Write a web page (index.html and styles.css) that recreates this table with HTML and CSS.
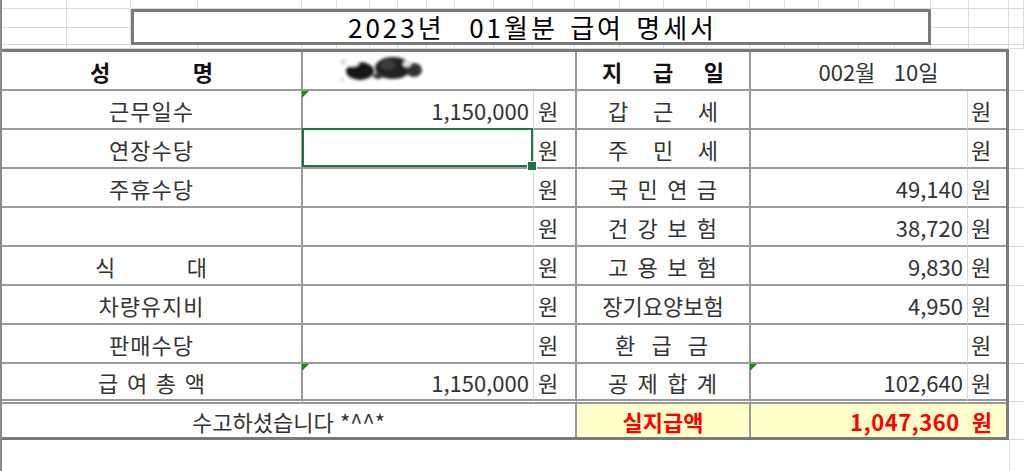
FILE: index.html
```html
<!DOCTYPE html>
<html lang="ko">
<head>
<meta charset="utf-8">
<title>급여 명세서</title>
<link rel="stylesheet" href="styles.css">
</head>
<body>
<div class="sheet">
  <div class="top">
    <div class="title">2023년  01월분 급여 명세서</div>
    <div class="gc"></div><div class="gc"></div><div class="gc"></div><div class="gc"></div><div class="gc"></div><div class="gc"></div><div class="gc"></div><div class="gc"></div><div class="gc"></div><div class="gc"></div><div class="gc"></div><div class="gc"></div>
    <div class="gc"></div><div class="gc"></div><div class="gc"></div><div class="gc"></div><div class="gc"></div><div class="gc"></div><div class="gc"></div><div class="gc"></div><div class="gc"></div><div class="gc"></div><div class="gc"></div><div class="gc"></div>
    <div class="gc"></div><div class="gc"></div><div class="gc"></div><div class="gc"></div><div class="gc"></div>
    <div class="gc"></div><div class="gc"></div><div class="gc"></div><div class="gc"></div><div class="gc"></div>
    <div class="gc"></div><div class="gc"></div><div class="gc"></div><div class="gc"></div><div class="gc"></div><div class="gc"></div><div class="gc"></div><div class="gc"></div><div class="gc"></div><div class="gc"></div><div class="gc"></div><div class="gc"></div>
    <div class="gc"></div><div class="gc"></div><div class="gc"></div><div class="gc"></div><div class="gc"></div><div class="gc"></div><div class="gc"></div><div class="gc"></div><div class="gc"></div><div class="gc"></div><div class="gc"></div><div class="gc"></div>
  </div>

  <div class="main">
    <div class="slip">
      <!-- row 1 -->
      <div class="c dist b pn"><span>성</span><span>명</span></div>
      <div class="c span2 name">
        <svg class="blob" width="88" height="32" viewBox="0 0 88 32">
          <defs><filter id="bl" x="-30%" y="-50%" width="160%" height="200%"><feGaussianBlur stdDeviation="1.4"/></filter></defs>
          <g filter="url(#bl)">
            <ellipse cx="7" cy="10" rx="5" ry="3" fill="#d8d8d8"/>
            <ellipse cx="22" cy="19" rx="14" ry="9" fill="#161616"/>
            <ellipse cx="14" cy="11" rx="7" ry="3.5" fill="#ffffff"/>
            <ellipse cx="55" cy="16" rx="18" ry="11" fill="#222"/>
            <ellipse cx="50" cy="13" rx="7" ry="5" fill="#3c3c3c"/>
            <ellipse cx="76" cy="18" rx="8" ry="7" fill="#333"/>
            <ellipse cx="69" cy="12" rx="4" ry="3" fill="#e6e6e6"/>
            <ellipse cx="40" cy="24" rx="5" ry="3" fill="#3a3a3a"/>
            <ellipse cx="4" cy="28" rx="2" ry="1" fill="#bbb"/>
          </g>
        </svg>
      </div>
      <div class="c dist b pj"><span>지</span><span>급</span><span>일</span></div>
      <div class="c span2 end ctr pre">002월   10일</div>

      <!-- row 2 -->
      <div class="c ctr lbl">근무일수</div>
      <div class="c v tri">1,150,000</div>
      <div class="c w">원</div>
      <div class="c dist pr"><span>갑</span><span>근</span><span>세</span></div>
      <div class="c v"></div>
      <div class="c w end">원</div>

      <!-- row 3 -->
      <div class="c ctr lbl rowsel">연장수당</div>
      <div class="c v sel"></div>
      <div class="c w">원</div>
      <div class="c dist pr"><span>주</span><span>민</span><span>세</span></div>
      <div class="c v"></div>
      <div class="c w end">원</div>

      <!-- row 4 -->
      <div class="c ctr lbl">주휴수당</div>
      <div class="c v"></div>
      <div class="c w">원</div>
      <div class="c dist pr4"><span>국</span><span>민</span><span>연</span><span>금</span></div>
      <div class="c v">49,140</div>
      <div class="c w end">원</div>

      <!-- row 5 -->
      <div class="c ctr"></div>
      <div class="c v"></div>
      <div class="c w">원</div>
      <div class="c dist pr4"><span>건</span><span>강</span><span>보</span><span>험</span></div>
      <div class="c v">38,720</div>
      <div class="c w end">원</div>

      <!-- row 6 -->
      <div class="c dist ps"><span>식</span><span>대</span></div>
      <div class="c v"></div>
      <div class="c w">원</div>
      <div class="c dist pr4"><span>고</span><span>용</span><span>보</span><span>험</span></div>
      <div class="c v">9,830</div>
      <div class="c w end">원</div>

      <!-- row 7 -->
      <div class="c ctr lbl">차량유지비</div>
      <div class="c v"></div>
      <div class="c w">원</div>
      <div class="c ctr">장기요양보험</div>
      <div class="c v">4,950</div>
      <div class="c w end">원</div>

      <!-- row 8 -->
      <div class="c ctr lbl">판매수당</div>
      <div class="c v"></div>
      <div class="c w">원</div>
      <div class="c dist ph"><span>환</span><span>급</span><span>금</span></div>
      <div class="c v"></div>
      <div class="c w end">원</div>

      <!-- row 9 -->
      <div class="c dist pg r9"><span>급</span><span>여</span><span>총</span><span>액</span></div>
      <div class="c v tri r9">1,150,000</div>
      <div class="c w r9">원</div>
      <div class="c dist pr4 r9"><span>공</span><span>제</span><span>합</span><span>계</span></div>
      <div class="c v tri r9">102,640</div>
      <div class="c w end r9">원</div>

      <!-- row 10 -->
      <div class="c span3 ctr r10">수고하셨습니다 *^^*</div>
      <div class="c ctr yel r10">실지급액</div>
      <div class="c span2 end yel total r10">1,047,360<span class="won">원</span></div>
    </div>
    <div class="filler">
      <div class="f0"></div><div></div><div></div><div></div><div></div><div></div><div></div><div></div><div class="f9"></div><div class="f9"></div>
    </div>
  </div>

  <div class="bottom"><div class="bl"></div></div>
</div>
</body>
</html>
```

FILE: styles.css
```css
* { box-sizing: border-box; }

body {
  margin: 0;
  background: #fff;
  font-family: "Noto Sans CJK KR", "Noto Sans", sans-serif;
}

.sheet {
  width: 1024px;
  height: 471px;
  border-left: 2px solid #8a8a8a;
  overflow: hidden;
  display: flex;
  flex-direction: column;
  background: #fff;
}

/* background spreadsheet grid above the slip */
.top {
  display: grid;
  grid-template-columns: 65px 64px 67px 104px 35px 33px 28px 29px 28px 39px 39px 42px 45px 44px 43px 43px 35px 34px 40px 36px 36px 38px 40px 1fr;
  grid-template-rows: 9px 19px 17px 4px;
  flex: none;
}

.gc {
  border-right: 1px solid #dcdcdc;
  border-bottom: 1px solid #dcdcdc;
}

.title {
  grid-column: 3 / 22;
  grid-row: 2 / 4;
  border: 3px solid #7a7a7a;
  background: #fff;
  display: flex;
  align-items: center;
  justify-content: center;
  font-size: 26px;
  font-weight: 400;
  color: #000;
  white-space: pre;
  letter-spacing: 3px;
  word-spacing: 2px;
  line-height: 1;
  padding-left: 3px;
}

.main {
  display: flex;
  flex: none;
}

.slip {
  width: 1007px;
  flex: none;
  display: grid;
  grid-template-columns: 301px 231px 43px 174px 217px 38px;
  grid-template-rows: repeat(8, 39px) 40px 33px;
  border-top: 3px solid #7a7a7a;
  border-right: 3px solid #7a7a7a;
  border-bottom: 3px solid #7a7a7a;
  font-size: 22px;
  color: #333;
}

.c {
  border-right: 2px solid #9a9a9a;
  border-bottom: 2px solid #9a9a9a;
  display: flex;
  align-items: center;
  position: relative;
  line-height: 1;
  white-space: nowrap;
}

.lbl { letter-spacing: 1px; }

.span2 { grid-column: span 2; }
.span3 { grid-column: span 3; }

.v {
  justify-content: flex-end;
  padding-right: 4px;
  border-right: 1px solid #d9d9d9;
}

.w { padding-left: 4px; }
.w.end { padding-left: 3px; }

.end { border-right: 0; }

.r9 { border-bottom: 5px double #9a9a9a; }
.r10 { border-bottom: 0; }

.ctr { justify-content: center; }
.dist { justify-content: space-between; }
.pre { white-space: pre; }

.b { font-weight: 700; color: #111; }

/* distributed label paddings */
.pn { padding: 0 88px 0 88px; }
.ps { padding: 0 94px 0 93px; }
.pg { padding: 0 96px 0 96px; }
.pj { padding: 0 25px 0 25px; }
.pr { padding: 0 31px 0 31px; }
.pr4 { padding: 0 32px 0 31px; }
.ph { padding: 0 41px 0 38px; }

.name { padding-left: 35px; }
.blob { margin-top: -6px; }

.yel {
  background: #ffffcc;
  color: #f00;
  font-weight: 700;
}

.total {
  justify-content: flex-end;
  padding-right: 14px;
  letter-spacing: 0.5px;
}

.won {
  margin-left: 12px;
  letter-spacing: 0;
}

/* green error indicator triangles */
.tri::before {
  content: "";
  position: absolute;
  top: 0;
  left: -1px;
  border-top: 7px solid #1a8a1a;
  border-right: 7px solid transparent;
}

/* active cell outline */
.sel::after {
  content: "";
  position: absolute;
  left: -1px;
  top: -2px;
  right: 0;
  bottom: 0;
  border: 2px solid #217346;
}

.sel::before {
  content: "";
  position: absolute;
  right: -4px;
  bottom: -4px;
  width: 8px;
  height: 8px;
  background: #217346;
  border: 1px solid #fff;
  z-index: 2;
}

/* row header highlight on the left frame */
.rowsel::before {
  content: "";
  position: absolute;
  left: -2px;
  top: -1px;
  bottom: -1px;
  width: 2px;
  background: #217346;
}

.filler {
  flex: 1;
  display: flex;
  flex-direction: column;
}

.filler div {
  height: 39px;
  flex: none;
  border-bottom: 1px solid #dcdcdc;
}

.filler .f0 { height: 42px; }
.filler .f9 { height: 38px; }

.bottom {
  flex: 1;
}

.bottom .bl {
  width: 1008px;
  height: 100%;
  border-right: 1px solid #dcdcdc;
}
```
